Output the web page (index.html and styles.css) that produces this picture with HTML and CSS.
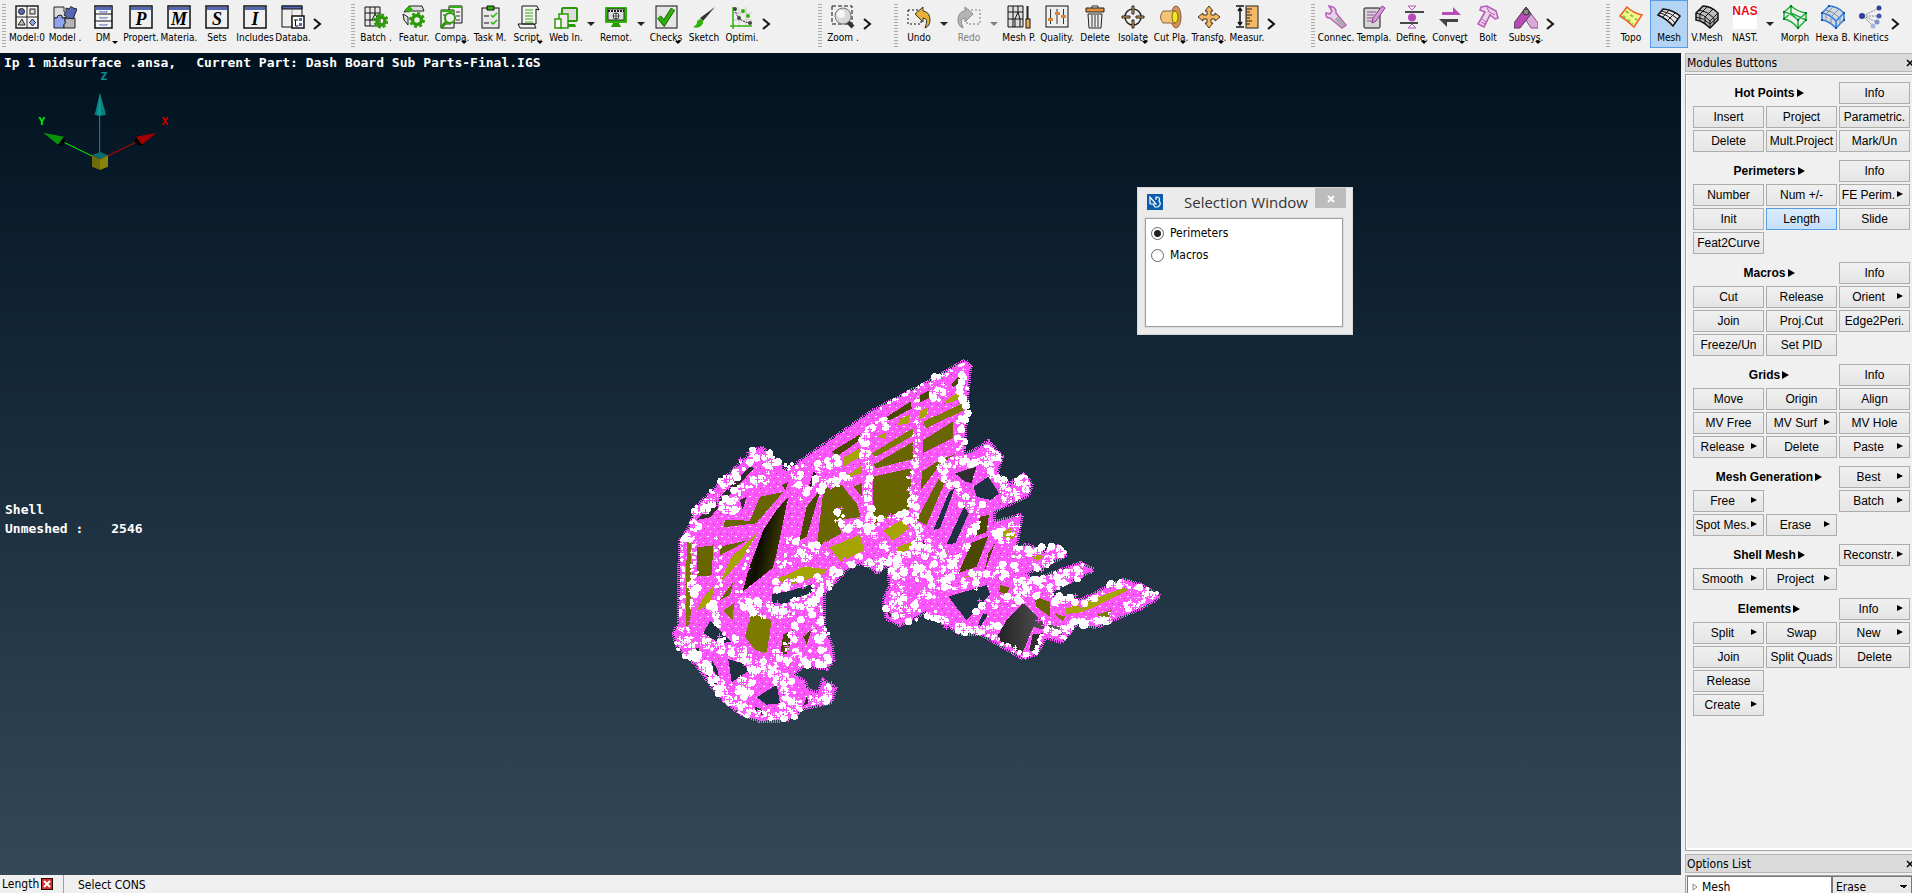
FILE: index.html
```html
<!DOCTYPE html>
<html lang="en">
<head>
    <meta charset="UTF-8">
    <meta name="viewport" content="width=device-width, initial-scale=1.0">
    <title>Ip 1 midsurface .ansa</title>
    <link rel="stylesheet" href="styles.css">
</head>
<body>
    <header class="toolbar">
        <div class="tool-group">
            <button class="tool"><svg viewBox="0 0 24 24"><rect x="1" y="1" width="22" height="22" fill="#f4f4f4" stroke="#222" stroke-width="1.5"/><path d="M12 1v22M1 12h22" stroke="#222"/><circle cx="6.5" cy="6.5" r="3" fill="#5468b4" stroke="#222"/><rect x="15" y="4" width="5" height="5" fill="#ddd" stroke="#222"/><path d="M3 20l4-6 3 6z" fill="#bbb" stroke="#222"/><path d="M17.5 14l3 3.5-3 3.5-3-3.5z" fill="#8fa5f0" stroke="#222"/></svg><span>Model:0</span></button>
            <button class="tool"><svg viewBox="0 0 24 24"><path d="M1 2h10v5q3 0 3 3t-3 3H1z" fill="#ddd" stroke="#222"/><path d="M1 13h3q0-3 3-3t2 3h3v4q3 0 2 3h-3v3H1z" fill="#8fa5f0" stroke="#222"/><path d="M12 13h10v10H11v-4q3-1 1-3z" fill="#b5b5b5" stroke="#222"/><path d="M13 3l3 1q2-4 4-1l4 1-4 10-4-1q-3 2-3-2l-2-1q3-3 2-7z" fill="#5468b4" stroke="#222"/></svg><span>Model .</span></button>
            <button class="tool has-menu"><svg viewBox="0 0 24 24"><rect x="4" y="1" width="17" height="22" fill="#f4f4f4" stroke="#111" stroke-width="1.5"/><path d="M4 2h17v3H4z" fill="#5468b4"/><path d="M4 9h17M4 16h17" stroke="#111"/><path d="M9 6v1h7V6M9 12v1h7v-1M9 19v1h7v-1" fill="none" stroke="#5468b4"/></svg><span>DM</span></button>
            <button class="tool"><svg viewBox="0 0 24 24"><rect x="1" y="1" width="22" height="22" fill="#f0f0f0" stroke="#111" stroke-width="1.5"/><path d="M2 2h20v3H2z" fill="#5468b4"/><text x="12" y="20" class="glyph">P</text></svg><span>Propert.</span></button>
            <button class="tool"><svg viewBox="0 0 24 24"><rect x="1" y="1" width="22" height="22" fill="#f0f0f0" stroke="#111" stroke-width="1.5"/><path d="M2 2h20v3H2z" fill="#5468b4"/><text x="12" y="20" class="glyph">M</text></svg><span>Materia.</span></button>
            <button class="tool"><svg viewBox="0 0 24 24"><rect x="1" y="1" width="22" height="22" fill="#f0f0f0" stroke="#111" stroke-width="1.5"/><path d="M2 2h20v3H2z" fill="#5468b4"/><text x="12" y="20" class="glyph">S</text></svg><span>Sets</span></button>
            <button class="tool"><svg viewBox="0 0 24 24"><rect x="1" y="1" width="22" height="22" fill="#f0f0f0" stroke="#111" stroke-width="1.5"/><path d="M2 2h20v3H2z" fill="#5468b4"/><text x="12" y="20" class="glyph">I</text></svg><span>Includes</span></button>
            <button class="tool"><svg viewBox="0 0 24 24"><rect x="1" y="1" width="20" height="21" fill="#f0f0f0" stroke="#111"/><path d="M1 1h20v3H1z" fill="#5468b4" stroke="#111"/><path d="M11 5v17" stroke="#999"/><rect x="11" y="11" width="12" height="12" fill="#fff" stroke="#111" stroke-width="1.5"/><path d="M13 15h4M14.500 15v6h3" fill="none" stroke="#111"/><path d="M18 13h3v3h-3zM18 18h3v3h-3z" fill="#5468b4"/></svg><span>Databa.</span></button>
            <button class="more" aria-label="More model tools"><svg viewBox="0 0 12 14"><path d="M2 2l6 5-6 5"/></svg></button>
        </div>

        <div class="tool-group">
            <button class="tool"><svg viewBox="0 0 24 24"><path d="M1 2h15v19H1zM6 2v19M11 2v7l-3 6M1 8h15M1 15h11M11 9l3 5" fill="#e8e8e8" stroke="#111"/><circle cx="17" cy="16" r="4" fill="none" stroke="#2a9a06" stroke-width="3.5"/><circle cx="17" cy="16" r="6.5" fill="none" stroke="#2a9a06" stroke-width="2" stroke-dasharray="3 2"/></svg><span>Batch .</span></button>
            <button class="tool"><svg viewBox="0 0 24 24"><path d="M2 7l5-6h13l2 5H9zM1 9l5 3v8l-4-5z" fill="#ddd" stroke="#222"/><path d="M3 4l5-3 3 4-5 3z" fill="#2fb30a"/><circle cx="15" cy="15" r="4.5" fill="#f0f0f0" stroke="#2a9a06" stroke-width="3.5"/><circle cx="15" cy="15" r="7" fill="none" stroke="#2a9a06" stroke-width="2" stroke-dasharray="3 2.5"/></svg><span>Featur.</span></button>
            <button class="tool has-menu"><svg viewBox="0 0 24 24"><path d="M9 1h13v17H9z" fill="#eee" stroke="#111"/><path d="M1 5h13v18H1z" fill="#eee" stroke="#111"/><path d="M9 2h13M1 6h13" stroke="#2fb30a" stroke-width="2"/><path d="M16 7h4M16 11h4M3 10h5M3 19h8M16 15h4" stroke="#333"/><circle cx="10" cy="13" r="5" fill="#eee" stroke="#2a9a06" stroke-width="2"/><path d="M6 17l-5 6" stroke="#2a9a06" stroke-width="3"/></svg><span>Compa.</span></button>
            <button class="tool"><svg viewBox="0 0 24 24"><rect x="4" y="3" width="17" height="20" fill="#e8e8e8" stroke="#111"/><path d="M9 1h7v4H9z" fill="#2fb30a" stroke="#111"/><path d="M6 11h5M6 18h5" stroke="#111"/><path d="M13 10l2 2 4-4M13 17l2 2 4-4" fill="none" stroke="#2fb30a" stroke-width="1.5"/></svg><span>Task M.</span></button>
            <button class="tool has-menu"><svg viewBox="0 0 24 24"><path d="M6 1h15l2 4-3-1v15H6zM2 19h16l2 4H4z" fill="#f4f4f4" stroke="#111"/><path d="M9 5h8M9 8h8M9 11h8M9 14h8M9 17h8" stroke="#2fb30a"/></svg><span>Script.</span></button>
            <button class="tool"><svg viewBox="0 0 24 24"><rect x="8" y="3" width="15" height="13" rx="1" fill="#ddd" stroke="#2a9a06" stroke-width="2"/><path d="M12 19h9l1 3H12z" fill="#2a9a06"/><rect x="5" y="9" width="9" height="14" fill="#eee" stroke="#2a9a06" stroke-width="1.5"/><rect x="1" y="14" width="6" height="9" fill="#fff" stroke="#2a9a06" stroke-width="1.5"/></svg><span>Web In.</span></button>
            <button class="drop" aria-label="Web interface options"></button>
            <button class="tool"><svg viewBox="0 0 24 24"><rect x="1" y="2" width="22" height="16" rx="1" fill="#2fb30a"/><path d="M9 18h6l2 4H7z" fill="#2a9a06"/><rect x="4" y="4" width="16" height="11" fill="#ddd" stroke="#333"/><path d="M4 6h16" stroke="#222" stroke-width="2" stroke-dasharray="2 1"/><circle cx="12" cy="11" r="3" fill="#fff" stroke="#333"/><path d="M9 11h6M12 8v6" stroke="#333"/></svg><span>Remot.</span></button>
            <button class="drop" aria-label="Remote options"></button>
            <button class="tool has-menu"><svg viewBox="0 0 24 24"><rect x="2" y="1" width="21" height="22" fill="#e6e6e6" stroke="#111"/><path d="M5 12l5 6 9-14" fill="none" stroke="#1c6a05" stroke-width="5"/><path d="M5 12l5 6 9-14" fill="none" stroke="#2fb30a" stroke-width="3"/></svg><span>Checks</span></button>
            <button class="tool"><svg viewBox="0 0 24 24"><path d="M23 2l-12 14-3-3z" fill="#333"/><path d="M8 14q5 1 2 6-3 4-9 2 4-2 4-5 0-2 3-3z" fill="#2fb30a"/></svg><span>Sketch</span></button>
            <button class="tool"><svg viewBox="0 0 24 24"><path d="M2 8h20M2 15h20M9 2v20M16 2v20" stroke="#ccc"/><path d="M3 2v22M0 21h22" stroke="#2fb30a" stroke-width="1.5"/><path d="M5 4q2 13 16 14" fill="none" stroke="#222" stroke-dasharray="2 1"/><g fill="#444"><circle cx="5" cy="4" r="2"/><circle cx="9" cy="13" r="2"/><circle cx="20" cy="18" r="2"/></g><g fill="#2fb30a"><circle cx="13" cy="6" r="2"/><circle cx="18" cy="11" r="2"/></g></svg><span>Optimi.</span></button>
            <button class="more" aria-label="More process tools"><svg viewBox="0 0 12 14"><path d="M2 2l6 5-6 5"/></svg></button>
        </div>

        <div class="tool-group">
            <button class="tool"><svg viewBox="0 0 24 24"><path d="M1 1h20v18H1z" fill="none" stroke="#111" stroke-dasharray="4 2"/><path d="M17 17l5 5" stroke="#333" stroke-width="4"/><circle cx="12" cy="11" r="8" fill="#d8d8d8" stroke="#777"/><circle cx="10" cy="9" r="4" fill="#f6f6f6"/></svg><span>Zoom .</span></button>
            <button class="more" aria-label="More zoom tools"><svg viewBox="0 0 12 14"><path d="M2 2l6 5-6 5"/></svg></button>
        </div>

        <div class="tool-group">
            <button class="tool"><svg viewBox="0 0 24 24"><path d="M1 5h13v14H1z" fill="none" stroke="#111" stroke-dasharray="2 2"/><path d="M8 9l8-7v4q7 1 7 9 0 6-5 8 4-10-2-10v4z" fill="#e8b23a" stroke="#333"/></svg><span>Undo</span></button>
            <button class="drop" aria-label="Undo history"></button>
            <button class="tool" disabled><svg viewBox="0 0 24 24"><path d="M10 5h13v14H10z" fill="none" stroke="#777" stroke-dasharray="2 2"/><path d="M16 9L8 2v4q-7 1-7 9 0 6 5 8-4-10 2-10v4z" fill="#b5b5b5" stroke="#888"/></svg><span>Redo</span></button>
            <button class="drop" aria-label="Redo history" disabled></button>
            <button class="tool"><svg viewBox="0 0 24 24"><path d="M1 1h15v21H1zM6 1v21M11 1v6l-3 7v8M1 7h15M1 14h15M11 7l2 7v8" fill="#ddd" stroke="#111"/><path d="M20.500 1v13" stroke="#222" stroke-width="2"/><rect x="19" y="14" width="4" height="9" fill="#f0ae50" stroke="#111"/></svg><span>Mesh P.</span></button>
            <button class="tool"><svg viewBox="0 0 24 24"><rect x="1" y="1" width="22" height="21" fill="#eee" stroke="#111"/><path d="M5.500 4v15M12 4v15M18.500 4v15" stroke="#333"/><path d="M3 13h5v3H3zM10 7h5v3h-5zM16 10h5v3h-5z" fill="#d6873c"/></svg><span>Quality.</span></button>
            <button class="tool"><svg viewBox="0 0 24 24"><path d="M9 3V1h6v2" fill="none" stroke="#333"/><path d="M3 3h18v4H3z" fill="#e0903f" stroke="#222"/><path d="M5 9h14l-1 14H6z" fill="#eee" stroke="#222"/><path d="M9 10v12M12 10v12M15 10v12" stroke="#333"/></svg><span>Delete</span></button>
            <button class="tool has-menu"><svg viewBox="0 0 24 24"><circle cx="12" cy="12" r="8" fill="none" stroke="#222" stroke-width="1.5"/><path d="M11 1h2v8h-2zM11 15h2v8h-2zM1 11h8v2H1zM15 11h8v2h-8z" fill="#f0ae50" stroke="#222"/></svg><span>Isolate</span></button>
            <button class="tool has-menu"><svg viewBox="0 0 24 24"><ellipse cx="17" cy="12" rx="5" ry="11" fill="#d9915c" stroke="#8a5a30"/><path d="M4 6h12v12H4q-5-6 0-12z" fill="#f3c478" stroke="#8a6a40"/><ellipse cx="16" cy="12" rx="3" ry="6" fill="#f2e81b" stroke="#776510"/></svg><span>Cut Pla.</span></button>
            <button class="tool has-menu"><svg viewBox="0 0 24 24"><path d="M12 1l4 5h-2v4h4V8l5 4-5 4v-2h-4v4h2l-4 5-4-5h2v-4H6v2l-5-4 5-4v2h4V6H8z" fill="#f3b965" stroke="#4a3414"/></svg><span>Transfo.</span></button>
            <button class="tool"><svg viewBox="0 0 24 24"><path d="M1 1h8M1 22h8M5 3v17M3 6l2-3 2 3M3 17l2 3 2-3" fill="none" stroke="#111" stroke-width="1.5"/><rect x="11" y="1" width="12" height="22" fill="#f3b965" stroke="#222"/><path d="M11 4h6M11 7h4M11 10h6M11 13h4M11 16h6M11 19h4" stroke="#222"/></svg><span>Measur.</span></button>
            <button class="more" aria-label="More edit tools"><svg viewBox="0 0 12 14"><path d="M2 2l6 5-6 5"/></svg></button>
        </div>

        <div class="tool-group">
            <button class="tool"><svg viewBox="0 0 24 24"><path d="M5 1l3 5-2 3-4-1q-1 5 4 5l12 10 4-3-10-12q1-6-7-7z" fill="#e8d4e8" stroke="#b65cb6" stroke-width="1.5"/><path d="M12 13l8 8" stroke="#aaa" stroke-width="4"/></svg><span>Connec.</span></button>
            <button class="tool"><svg viewBox="0 0 24 24"><rect x="2" y="3" width="16" height="20" rx="1" fill="#d5d5d5" stroke="#111"/><path d="M5 7h9M5 10h7M5 13h6M5 16h5" stroke="#a548a5"/><path d="M20 1l3 2-9 13-4 2 1-5z" fill="#d59ad5" stroke="#8a3c8a"/></svg><span>Templa.</span></button>
            <button class="tool has-menu"><svg viewBox="0 0 24 24"><path d="M5 7h19M0 18h18" stroke="#111" stroke-width="1.5"/><path d="M8 1h8l-4 4zM8 23h8l-4-4z" fill="#eee" stroke="#b65cb6"/><circle cx="12" cy="12.5" r="4" fill="#b84bb8"/></svg><span>Define.</span></button>
            <button class="tool has-menu"><svg viewBox="0 0 24 24"><path d="M4 7h11V2l8 8H4z" fill="#b84bb8"/><path d="M20 14H1l8 8v-5h11z" fill="#444"/></svg><span>Convert</span></button>
            <button class="tool"><svg viewBox="0 0 24 24"><path d="M5 2l6-1 9 5 2 7-3 1-5-4-6 12-6-3 7-12-5-2z" fill="#ead2ea" stroke="#b65cb6" stroke-width="1.5"/><path d="M6 14l4 3M5 17l4 2M11 2l2 5 6 3" fill="none" stroke="#b65cb6"/></svg><span>Bolt</span></button>
            <button class="tool has-menu"><svg viewBox="0 0 24 24"><path d="M12 2l12 16v5h-7L8 9z" fill="#d9a8d9" stroke="#805080"/><path d="M12 2l5 7L6 23H0v-5z" fill="#b84bb8" stroke="#444"/><circle cx="12" cy="7" r="3" fill="#888" stroke="#333"/></svg><span>Subsys.</span></button>
            <button class="more" aria-label="More assembly tools"><svg viewBox="0 0 12 14"><path d="M2 2l6 5-6 5"/></svg></button>
        </div>

        <nav class="tool-group">
            <button class="tool"><svg viewBox="0 0 24 24"><path d="M8 2q6 6 15 8l-8 12Q8 15 1 11z" fill="#f6f58c" stroke="#f0602a" stroke-width="1.5"/><path d="M7 6l11 9M4 11l10 8" stroke="#6cc83c" stroke-width="2" stroke-dasharray="3 3"/></svg><span>Topo</span></button>
            <button class="tool active"><svg viewBox="0 0 24 24"><path d="M6 4q10 1 17 7l-7 10Q10 14 1 10z" fill="#e8e8e8" stroke="#111" stroke-width="1.5"/><path d="M5 6q9 2 16 8M3 8q9 2 15 10M12 5l-6 7M18 8l-7 7" fill="none" stroke="#111"/></svg><span>Mesh</span></button>
            <button class="tool"><svg viewBox="0 0 24 24"><path d="M1 8l7-7q8 0 15 7v7l-8 8Q8 16 1 15z" fill="#bbb" stroke="#111" stroke-width="1.5"/><path d="M1 8q8 1 14 8v7M15 16l8-8M4 5q8 1 15 8v6M12 2L5 9v7M18 4l-8 8v7M1 12q8 1 14 7l8-7" fill="none" stroke="#111"/></svg><span>V.Mesh</span></button>
            <button class="tool"><svg viewBox="0 0 24 24"><path d="M0 0h24v24H0z" fill="#fff"/><text x="12" y="10" class="nas">NAS</text></svg><span>NAST.</span></button>
            <button class="drop" aria-label="Solver deck"></button>
            <button class="tool"><svg viewBox="0 0 24 24"><path d="M1 7l7-6q7 6 15 7v7l-8 8Q8 15 1 14zM1 7q7 1 14 8l8-7M15 15v8M8 1v7l15 7M8 8l-7 6" fill="none" stroke="#1db03a" stroke-width="1.5"/><path d="M0 6h2v2H0zM7 0h2v2H7zM22 7h2v2h-2zM14 14h2v2h-2zM14 22h2v2h-2zM0 13h2v2H0zM22 14h2v2h-2z" fill="#073"/></svg><span>Morph</span></button>
            <button class="tool"><svg viewBox="0 0 24 24"><path d="M1 8l7-7q8 0 15 7v7l-8 8Q8 16 1 15z" fill="#d0d8e0" stroke="#2a7de0" stroke-width="1.5"/><path d="M1 8q8 1 14 8v7M15 16l8-8" fill="none" stroke="#2a7de0" stroke-width="1.5"/><path d="M4 5q8 1 15 8v6M12 2L5 9v7M18 4l-8 8v7" fill="none" stroke="#889"/><path d="M0 7h2v2H0zM7 0h2v2H7zM22 7h2v2h-2zM14 22h2v2h-2zM0 14h2v2H0zM22 14h2v2h-2z" fill="#14509c"/></svg><span>Hexa B.</span></button>
            <button class="tool"><svg viewBox="0 0 24 24"><path d="M4 11L20 3M4 11h15M4 11l10 10M4 11l14 6" stroke="#889" stroke-dasharray="2 1"/><circle cx="3" cy="11" r="3" fill="#2b3f9e"/><circle cx="20" cy="3" r="2.5" fill="#2b3f9e"/><circle cx="20" cy="11" r="2.5" fill="#4458ae"/><circle cx="18" cy="17" r="2.5" fill="#8490c8"/><circle cx="14" cy="21" r="2.5" fill="#a8b2dc"/></svg><span>Kinetics</span></button>
            <button class="more" aria-label="More modules"><svg viewBox="0 0 12 14"><path d="M2 2l6 5-6 5"/></svg></button>
        </nav>
    </header>

    <div class="workspace">
        <main class="work">
            <section class="view">
                <p class="title-line"><span>Ip 1 midsurface .ansa,</span><span>Current Part: Dash Board Sub Parts-Final.IGS</span></p>

                <svg class="axes" viewBox="90 204 450 315">
                    <path d="M299 465V340" stroke="#0a9494" stroke-width="3"/>
                    <path d="M276 468L180 421" stroke="#0f0" stroke-width="3"/>
                    <path d="M323 468L420 421" stroke="#d00000" stroke-width="3"/>
                    <path d="M300 278l18 66q-18 6-34 0z" fill="#0a8080"/>
                    <path d="M300 278l4 68h-12z" fill="#0b9a9a"/>
                    <circle cx="180" cy="422" r="15" fill="#000"/>
                    <path d="M130 398l62 12-18 24z" fill="#0a900a"/>
                    <circle cx="420" cy="422" r="15" fill="#000"/>
                    <path d="M470 398l-62 12 18 24z" fill="#a00000"/>
                    <path d="M276 466l24-10 24 10-24 12z" fill="#0a6c6c"/>
                    <path d="M276 466l24 12v32l-24-10z" fill="#6e6c08"/>
                    <path d="M324 466l-24 12v32l24-10z" fill="#86840a"/>
                    <text x="312" y="240" fill="#0a9494">Z</text>
                    <text x="126" y="375" fill="#00f000">Y</text>
                    <text x="495" y="375" fill="#d00000">X</text>
                </svg>

                <svg class="part" viewBox="0 0 1560 1200">
                    <defs>
                        <linearGradient id="fold" x1="0" y1="0" x2="1" y2="0.4">
                            <stop offset="0" stop-color="#5c5a00"/>
                            <stop offset="0.5" stop-color="#0c0c00"/>
                            <stop offset="1" stop-color="#4c4a00"/>
                        </linearGradient>
                        <linearGradient id="bracket" gradientUnits="userSpaceOnUse" x1="1010" y1="860" x2="1210" y2="860">
                            <stop offset="0" stop-color="#222"/>
                            <stop offset="0.4" stop-color="#3c3c3c"/>
                            <stop offset="1" stop-color="#666"/>
                        </linearGradient>
                        <pattern id="ticks" width="42" height="30" patternUnits="userSpaceOnUse">
                            <path d="M0 0h42v30H0z" fill="#ff55ff"/>
                            <path d="M3 6h3v3H3zM24 3h3v3h-3zM15 18h6v3h-6zM36 21h3v3h-3z" fill="#fff"/>
                            <path d="M12 9h3v3h-3zM33 12h3v3h-3zM6 24h3v3H6z" fill="#9a4a78"/>
                        </pattern>
                    </defs>
                    <!-- shell outline -->
                    <path class="outline" fill="url(#ticks)" d="M915 62L800 130 640 212 500 310 410 372 375 395 330 350 305 322 280 335 200 410 110 500 90 560 60 605 58 850 42 880 50 915 110 975 180 1070 240 1120 300 1142 380 1140 430 1105 515 1085 525 1045 490 1022 475 1060 440 1050 435 1025 400 1005 430 975 500 985 520 960 515 920 490 860 490 760 530 720 560 685 610 665 650 695 688 670 690 740 672 780 680 835 720 855 800 812 870 860 900 880 960 880 1090 955 1130 940 1155 890 1205 905 1250 850 1310 860 1380 830 1440 805 1500 770 1440 735 1390 720 1260 782 1160 768 1185 745 1300 690 1260 670 1120 722 1095 700 1220 645 1190 615 1150 640 1100 615 1065 630 1085 525 1000 548 1000 515 1105 465 1115 430 1090 405 1050 440 1010 400 1025 350 985 305 940 335 910 345 922 150 930 80z"/>
                    <!-- background through the openings -->
                    <g fill="#1f3242">
                        <path d="M940 440l45-30 32 50-25 20-42-10zM335 762l45-7 75-22 5 22-80 34-45 6zM150 843l65 62-35 5-50-30zM205 958l80 22-70 47zM290 1072l60-38 10 56-40 4zM865 770l115-35 10 28-70 78zM912 500l14 20-40 90-26 2zM868 455l16-10-44 120-20 5zM155 960l18 30 5 30-22-35zM790 600l12 10-2 18-12-8zM970 820l14 4-22 34-8-4z"/>
                    </g>
                    <!-- dark faces -->
                    <g fill="#4b4900">
                        <path d="M875 130l35-32-4 35-28 8zM780 165l32-15-6 25-28 14zM665 240l88-56 2 22-88 46zM515 335l85-52v18l-70 48zM440 500l42-52-42 142-22 12zM895 700l40-92 50-20-35 92zM940 590l20-60 27-5-8 52zM370 882l30-12-16 70-24 6zM430 890l26-22-16 44zM365 435l20-10-8 25zM985 640l20-30-30 80z"/>
                    </g>
                    <path fill="url(#fold)" d="M385 470l-35 170-12 44-90 71 17-65 45-120 40-60z"/>
                    <!-- mid faces -->
                    <g fill="#696600">
                        <path d="M790 300l90-56v50l-92 46zM640 375l120-70v52l-112 28zM640 410l115-26-8 126-107 42zM785 395l55-35 52-20-50 32-58 76zM470 622l20-170 20-16 35-1 45 56 12 40-72 10 15 38zM770 540l65-122 18 12-54 126zM300 470l70-14-82 94-98 12 5-22 75 2zM110 622l50-6-5 90-45 4zM180 620l86-20-86 46zM1125 770l45 16v44l-42-30zM1020 735l30 8-12 20-20-8zM180 780l40-55-10 40zM580 440l25-10v40z"/>
                    </g>
                    <g fill="#7d7a00">
                        <path d="M80 602l14-2-2 250-14 12zM275 820l60 20-15 100-35-10-30-40zM790 245l120-56v22l-112 54zM635 340l125-76v22l-112 64zM1310 825l46-16-10 26zM190 812l32-22-4 52zM1180 820l36 10-8 14zM840 620l20 20-6 14z"/>
                    </g>
                    <!-- lit faces -->
                    <g fill="#a6a400">
                        <path d="M855 182l52-30-2 24-45 14zM780 215l22-14v24l-22 12zM718 238l28-14v26l-32 6zM552 352l48-28v26l-52 32zM552 412l54-36v20l-48 22zM292 578l-42 74-72 80 36-80zM160 738l-5 54-46 20 22-40zM345 720l85-40 72 8-12 14-120 40zM508 622l92-38 12 46-68 36zM668 572l72-38 6 32-46 36zM1020 580l46-22v32l-22 10zM1088 628l64 22-22 12zM1218 806l172-62 16 6-136 66-52 6zM650 290l30-15-6 22zM715 620l40-14v22l-40 10zM900 715l50-15-10 10z"/>
                    </g>
                    <!-- brackets -->
                    <path fill="url(#bracket)" d="M1090 790l62 60 58 14-4 22-86-26-34 82-78-46 32-56zM445 440l16-45 8 8-16 40z"/>
                    <g fill="#303030">
                        <path d="M885 400l65-20-16 50-20-6zM1118 882l32-2-20 55-22-4zM110 540l160-160 12 4-132 148zM135 1000l55 40 15 36-45-36zM285 1100l32 16-14 12-24-8zM680 810l22 25-14-5zM100 930l16-8v30zM240 480l20-10-12 40zM440 1070l6 20-16 8z"/>
                    </g>
                    <g id="marks"></g>
                </svg>

                <p class="readout"><span>Shell</span><br><span>Unmeshed :</span><span class="count">2546</span></p>

                <form class="dialog">
                    <header class="dialog-head">
                        <svg class="dialog-logo" viewBox="0 0 16 16"><path d="M0 0h16v16H0z" fill="#0b5cad"/><path d="M3 10V3l6 7H3M9 6V3q5 0 3 4 3 3-1 6H8l-2-3" fill="none" stroke="#fff" stroke-width="1.2"/></svg>
                        <h2>Selection Window</h2>
                        <button type="button" class="dialog-close" aria-label="Close"><svg viewBox="0 0 8 8"><path d="M1 1l6 6M7 1L1 7"/></svg></button>
                    </header>
                    <div class="dialog-body">
                        <label><input type="radio" name="pick" checked>Perimeters</label>
                        <label><input type="radio" name="pick">Macros</label>
                    </div>
                </form>
            </section>

            <footer class="status">
                <span class="status-tool">Length<button aria-label="Cancel Length"><svg viewBox="0 0 8 8"><path d="M1 1l6 6M7 1L1 7"/></svg></button></span>
                <span class="status-hint">Select CONS</span>
            </footer>
        </main>

        <aside class="dock">
            <div class="dock-head"><h2>Modules Buttons</h2><button aria-label="Close Modules Buttons"><svg viewBox="0 0 8 8"><path d="M1 1l6 6M7 1L1 7"/></svg></button></div>
            <div class="modules">
                <section>
                    <h3>Hot Points</h3><button>Info</button>
                    <button>Insert</button><button>Project</button><button>Parametric.</button>
                    <button>Delete</button><button>Mult.Project</button><button>Mark/Un</button>
                </section>
                <section>
                    <h3>Perimeters</h3><button>Info</button>
                    <button>Number</button><button>Num +/-</button><button class="sub">FE Perim.</button>
                    <button>Init</button><button class="active">Length</button><button>Slide</button>
                    <button>Feat2Curve</button>
                </section>
                <section>
                    <h3>Macros</h3><button>Info</button>
                    <button>Cut</button><button>Release</button><button class="sub">Orient</button>
                    <button>Join</button><button>Proj.Cut</button><button>Edge2Peri.</button>
                    <button>Freeze/Un</button><button>Set PID</button>
                </section>
                <section>
                    <h3>Grids</h3><button>Info</button>
                    <button>Move</button><button>Origin</button><button>Align</button>
                    <button>MV Free</button><button class="sub">MV Surf</button><button>MV Hole</button>
                    <button class="sub">Release</button><button>Delete</button><button class="sub">Paste</button>
                </section>
                <section>
                    <h3>Mesh Generation</h3><button class="sub">Best</button>
                    <button class="sub">Free</button><button class="sub last-col">Batch</button>
                    <button class="sub">Spot Mes.</button><button class="sub">Erase</button>
                </section>
                <section>
                    <h3>Shell Mesh</h3><button class="sub">Reconstr.</button>
                    <button class="sub">Smooth</button><button class="sub">Project</button>
                </section>
                <section>
                    <h3>Elements</h3><button class="sub">Info</button>
                    <button class="sub">Split</button><button>Swap</button><button class="sub">New</button>
                    <button>Join</button><button>Split Quads</button><button>Delete</button>
                    <button class="first-col">Release</button>
                    <button class="sub first-col">Create</button>
                </section>
            </div>
            <div class="dock-head"><h2>Options List</h2><button aria-label="Close Options List"><svg viewBox="0 0 8 8"><path d="M1 1l6 6M7 1L1 7"/></svg></button></div>
            <div class="options">
                <label for="mesh-option"><svg viewBox="0 0 6 8"><path d="M1 1l4 3-4 3z"/></svg>Mesh</label>
                <select id="mesh-option"><option>Erase</option></select>
            </div>
        </aside>
    </div>

    <script src="script.js"></script>
</body>
</html>
```
FILE: styles.css
```css
* {
    margin: 0;
    padding: 0;
    box-sizing: border-box;
}

body {
    display: flex;
    flex-direction: column;
    height: 100vh;
    overflow: hidden;
    background-color: #f0f0f0;
    color: #000;
    font-family: "DejaVu Sans Condensed", "DejaVu Sans", sans-serif;
    font-size: 12px;
}

button,
select,
input {
    font: inherit;
    color: inherit;
}

/* Toolbar */
.toolbar {
    display: grid;
    grid-template-columns: 349fr 467fr 76fr 417fr 295fr 308fr;
    height: 53px;
    flex: none;
}

.tool-group {
    position: relative;
    display: flex;
    min-width: 0;
    padding-left: 8px;
}

.tool-group::before {
    content: "";
    position: absolute;
    left: 2px;
    top: 3px;
    width: 4px;
    height: 44px;
    background-image: radial-gradient(circle, #aaa 40%, transparent 50%);
    background-size: 2px 3px;
}

.tool {
    position: relative;
    display: flex;
    flex-direction: column;
    align-items: center;
    gap: 2px;
    width: 38px;
    height: 48px;
    flex: none;
    padding-top: 4px;
    border: 1px solid transparent;
    background: none;
    font-size: 10px;
    line-height: 14px;
    white-space: nowrap;
}

.tool svg {
    width: 24px;
    height: 24px;
    flex: none;
}

.tool.active {
    background-color: #b3d4f2;
    border-color: #569de5;
}

.tool:disabled {
    color: #808080;
}

.tool.has-menu::after {
    content: "";
    position: absolute;
    right: 3px;
    bottom: 3px;
    border: 3px solid transparent;
    border-top-color: #000;
    border-bottom: none;
}

.glyph {
    font: italic bold 18px "Liberation Serif", serif;
    text-anchor: middle;
}

.nas {
    font: bold 12px "Liberation Sans", sans-serif;
    text-anchor: middle;
    fill: #e81010;
}

.drop,
.more {
    display: flex;
    align-items: center;
    justify-content: center;
    width: 12px;
    height: 48px;
    flex: none;
    border: none;
    background: none;
}

.drop::after {
    content: "";
    border: 4px solid transparent;
    border-top-color: #222;
    border-bottom: none;
}

.drop:disabled::after {
    border-top-color: #808080;
}

.more svg {
    width: 12px;
    height: 14px;
    fill: none;
    stroke: #111;
    stroke-width: 2;
}

/* Work area */
.workspace {
    display: flex;
    flex: 1;
    min-height: 0;
}

.work {
    display: flex;
    flex-direction: column;
    flex: 1;
    min-width: 0;
}

.view {
    position: relative;
    flex: 1;
    overflow: hidden;
    background-image: linear-gradient(#001220, #354858);
    color: #fff;
    font: bold 13px/19px "DejaVu Sans Mono", monospace;
}

.title-line {
    display: flex;
    gap: 20px;
    padding-left: 4px;
    white-space: nowrap;
}

.axes {
    position: absolute;
    left: 30px;
    top: 15px;
    width: 150px;
    height: 105px;
}

.axes text {
    font: bold 34px "DejaVu Sans Mono", monospace;
    text-anchor: middle;
}

.part {
    position: absolute;
    left: 660px;
    top: 287px;
    width: 520px;
    height: 400px;
    shape-rendering: crispEdges;
}

.outline {
    stroke: #ff55ff;
    stroke-width: 14;
    stroke-dasharray: 3 3;
}

.readout {
    position: absolute;
    left: 5px;
    top: 447px;
}

.count {
    margin-left: 28px;
}

/* Selection window */
.dialog {
    position: absolute;
    left: 1137px;
    top: 134px;
    display: flex;
    flex-direction: column;
    width: 216px;
    height: 148px;
    padding: 0 7px 7px;
    border: 1px solid #d8d8d8;
    background-color: #ebebeb;
    color: #000;
    font: 12px/22px "DejaVu Sans Condensed", "DejaVu Sans", sans-serif;
}

.dialog-head {
    display: flex;
    justify-content: space-between;
    height: 30px;
    margin-right: -1px;
    padding-left: 2px;
}

.dialog-logo {
    width: 16px;
    height: 16px;
    margin-top: 6px;
}

.dialog-head h2 {
    padding-left: 14px;
    color: #333;
    font: 15px/28px "Open Sans", sans-serif;
}

.dialog-close {
    width: 31px;
    height: 20px;
    border: none;
    background-color: #bcbcbc;
}

.dialog-close svg {
    width: 8px;
    height: 8px;
    stroke: #fff;
    stroke-width: 2;
}

.dialog-body {
    flex: 1;
    margin-right: 2px;
    padding: 3px 5px;
    border: 1px solid #a0a0a0;
    outline: 1px solid #dcdcdc;
    background-color: #fff;
}

.dialog-body label {
    display: flex;
    align-items: center;
    gap: 6px;
}

.dialog-body input {
    appearance: none;
    width: 13px;
    height: 13px;
    border: 1px solid #666;
    border-radius: 50%;
}

.dialog-body input:checked {
    background-image: radial-gradient(circle, #222 3px, #fff 4px);
}

/* Status bar */
.status {
    display: flex;
    height: 18px;
    flex: none;
    line-height: 20px;
}

.status-tool {
    display: flex;
    align-items: center;
    gap: 2px;
    width: 64px;
    padding-left: 2px;
    border-right: 1px solid #a0a0a0;
}

.status-tool button {
    display: flex;
    align-items: center;
    justify-content: center;
    width: 12px;
    height: 12px;
    border: 1px solid #200;
    background-color: #d03030;
}

.status-tool svg {
    width: 8px;
    height: 8px;
    stroke: #fff;
    stroke-width: 2;
}

.status-hint {
    padding-left: 14px;
}

/* Dock */
.dock {
    display: flex;
    flex-direction: column;
    width: 227px;
    margin-left: 4px;
    flex: none;
}

.dock-head {
    display: flex;
    align-items: center;
    justify-content: space-between;
    height: 19px;
    flex: none;
    overflow: hidden;
    padding-left: 1px;
    border: 1px solid #b4b4b4;
    border-right: none;
    background-color: #dadada;
}

.dock-head h2 {
    font-size: 12px;
    font-weight: normal;
}

.dock-head button {
    width: 8px;
    height: 8px;
    margin-right: -2px;
    border: none;
    background: none;
    line-height: 0;
}

.dock-head svg {
    width: 8px;
    height: 8px;
    stroke: #000;
    stroke-width: 1.5;
}

.modules {
    display: flex;
    flex-direction: column;
    gap: 8px;
    flex: 1;
    min-height: 0;
    margin: 2px 0 3px;
    padding: 7px 2px 0 7px;
    border: 1px solid #a0a0a0;
    border-right: none;
    box-shadow: inset 1px 1px #fff, inset 0 -2px #fff;
    font-family: "Liberation Sans", sans-serif;
}

.modules section {
    display: grid;
    grid-template-columns: repeat(3, 1fr);
    grid-auto-rows: 22px;
    gap: 2px;
}

.modules h3 {
    grid-column: span 2;
    display: flex;
    align-items: center;
    justify-content: center;
    gap: 2px;
    padding-left: 8px;
    font-size: 12px;
}

.modules h3::after {
    content: "";
    border: 4px solid transparent;
    border-left: 7px solid #000;
    border-right: none;
}

.modules button {
    position: relative;
    display: flex;
    align-items: center;
    justify-content: center;
    min-width: 0;
    border: 1px solid #adadad;
    background-image: linear-gradient(#f0f0f0, #e5e5e5);
    white-space: nowrap;
}

.modules button.active {
    border-color: #569de5;
    background-image: linear-gradient(#daecfc, #c4e0fc);
}

.modules .sub {
    padding-right: 12px;
}

.modules .sub::after {
    content: "";
    position: absolute;
    right: 6px;
    top: 6px;
    border: 3px solid transparent;
    border-left: 6px solid #000;
    border-right: none;
}

.modules .first-col {
    grid-column: 1;
}

.modules .last-col {
    grid-column: 3;
}

.options {
    display: grid;
    grid-template-columns: 145fr 80fr;
    height: 18px;
    margin-top: 2px;
    padding-left: 1px;
    overflow: hidden;
    border-top: 1px solid #a0a0a0;
    border-left: 1px solid #a0a0a0;
}

.options label,
.options select {
    height: 22px;
    border: 1px solid #777;
    background-color: #fff;
}

.options label {
    display: flex;
    align-items: center;
    gap: 4px;
    padding-left: 4px;
}

.options label svg {
    width: 6px;
    height: 8px;
    fill: none;
    stroke: #888;
}

.options select {
    appearance: none;
    padding-left: 3px;
    border-radius: 0;
    background-color: #e8e8e8;
    background-image: linear-gradient(to bottom left, #111 50%, transparent 50%), linear-gradient(to bottom right, #111 50%, transparent 50%);
    background-repeat: no-repeat;
    background-position: right 7px center, right 3px center;
    background-size: 4px 4px;
}
```
FILE: script.js
```javascript
// hot points along the shell edges: [spread, step, x, y, x, y, ...]
const seams = [
    [6, 14, 915, 68, 800, 132, 640, 215],
    [12, 7, 920, 75, 910, 140, 918, 220, 895, 250, 905, 340],
    [22, 5, 850, 100, 840, 150, 820, 200],
    [8, 5, 770, 175, 768, 300, 762, 400],
    [10, 5, 610, 280, 620, 360, 626, 550],
    [14, 6, 620, 265, 690, 245],
    [16, 5, 470, 385, 540, 355],
    [20, 5, 305, 335, 340, 385, 410, 385, 430, 460, 500, 425, 570, 420],
    [16, 5, 290, 345, 200, 425, 115, 520, 95, 570, 68, 605],
    [20, 5, 340, 395, 240, 455, 180, 490, 230, 520],
    [5, 12, 66, 610, 66, 850],
    [6, 12, 102, 600, 98, 720, 95, 850],
    [8, 9, 172, 590, 175, 700, 180, 780],
    [8, 11, 270, 640, 225, 800],
    [14, 7, 100, 700, 100, 770],
    [20, 3, 65, 870, 65, 910, 120, 900, 200, 935, 280, 960],
    [12, 6, 150, 800, 190, 880, 240, 900],
    [14, 3, 62, 900, 115, 965, 190, 1060, 245, 1107, 310, 1127, 390, 1120, 425, 1090],
    [20, 4, 320, 960, 225, 1040, 280, 1060],
    [22, 3, 320, 990, 390, 1040, 380, 1105],
    [22, 4, 300, 960, 400, 955, 450, 955, 500, 965],
    [12, 4, 495, 1035, 510, 1055, 495, 1080, 440, 1080],
    [24, 4, 250, 790, 350, 820, 400, 800, 470, 760],
    [20, 4, 470, 790, 470, 860, 495, 920],
    [20, 6, 420, 850, 380, 940],
    [14, 6, 350, 740, 460, 725, 500, 735, 540, 690],
    [18, 5, 360, 670, 440, 640, 500, 620],
    [14, 6, 380, 580, 410, 610, 450, 640],
    [15, 5, 530, 515, 545, 560, 600, 560, 640, 590, 690, 620],
    [12, 7, 600, 560, 730, 520, 760, 545],
    [14, 4, 560, 670, 620, 655, 650, 680, 700, 650, 780, 620],
    [22, 3, 715, 660, 710, 750, 698, 800, 720, 825],
    [30, 3, 745, 700, 830, 700, 780, 780, 725, 820],
    [26, 4, 760, 600, 860, 650, 870, 735, 960, 715],
    [12, 6, 755, 400, 760, 550, 790, 600, 800, 650],
    [16, 6, 840, 380, 870, 430, 930, 490, 950, 510],
    [16, 3, 930, 490, 960, 510],
    [16, 5, 850, 375, 900, 365, 985, 360],
    [18, 3, 985, 325, 1005, 350, 970, 370],
    [14, 4, 1000, 400, 1040, 450, 1088, 415, 1100, 450, 1020, 490],
    [10, 7, 960, 510, 920, 610, 880, 690],
    [16, 4, 1070, 540, 1030, 600, 1005, 570],
    [14, 4, 1060, 640, 1110, 630, 1190, 630, 1205, 643, 1130, 685],
    [22, 5, 960, 715, 1060, 690, 1100, 740, 1170, 760, 1240, 790],
    [10, 8, 1110, 728, 1260, 680, 1290, 688, 1180, 740],
    [20, 4, 965, 800, 1020, 780, 1060, 790, 1100, 740],
    [12, 4, 885, 862, 950, 868, 1020, 860],
    [10, 5, 800, 812, 870, 860],
    [7, 6, 990, 885, 1090, 947, 1130, 933, 1150, 880],
    [10, 5, 1140, 840, 1205, 890, 1240, 845, 1310, 848, 1370, 825],
    [10, 8, 1260, 790, 1385, 727, 1440, 745],
    [12, 5, 1390, 798, 1430, 793, 1450, 755, 1490, 768]
];

let seed = 7;

function random() {
    seed = (seed * 16807) % 2147483647;
    return seed / 2147483647;
}

function addPath(parent, d, color, width) {
    const path = document.createElementNS('http://www.w3.org/2000/svg', 'path');
    path.setAttribute('d', d);
    path.setAttribute('fill', 'none');
    path.setAttribute('stroke', color);
    path.setAttribute('stroke-width', width);
    path.setAttribute('stroke-linecap', width > 4 ? 'round' : 'butt');
    parent.appendChild(path);
}

function drawMarks() {
    const marks = document.getElementById('marks');
    let dots = '';
    let small = '';
    let crosses = '';
    let bars = '';

    for (const [spread, step, ...points] of seams) {
        for (let i = 0; i < points.length - 2; i += 2) {
            const dx = points[i + 2] - points[i];
            const dy = points[i + 3] - points[i + 1];
            const count = Math.ceil(Math.hypot(dx, dy) / step);

            for (let n = 0; n < count; n++) {
                const x = Math.round(points[i] + dx * n / count + (random() - 0.5) * spread * 2);
                const y = Math.round(points[i + 1] + dy * n / count + (random() - 0.5) * spread * 2);
                const kind = random();

                if (kind < 0.24 && spread > 8) {
                    dots += `M${x} ${y}h1`;
                } else if (kind < 0.6) {
                    small += `M${x} ${y}h1`;
                } else if (kind < 0.85) {
                    crosses += `M${x - 8} ${y}h16M${x} ${y - 8}v16`;
                } else {
                    bars += `M${x - 6} ${y}h12M${x} ${y - 6}v12`;
                }
            }
        }
    }

    addPath(marks, dots, '#fff', 22);
    addPath(marks, small, '#fff', 11);
    addPath(marks, crosses, '#ff55ff', 3);
    addPath(marks, bars, '#fff', 3);
}

drawMarks();
```
